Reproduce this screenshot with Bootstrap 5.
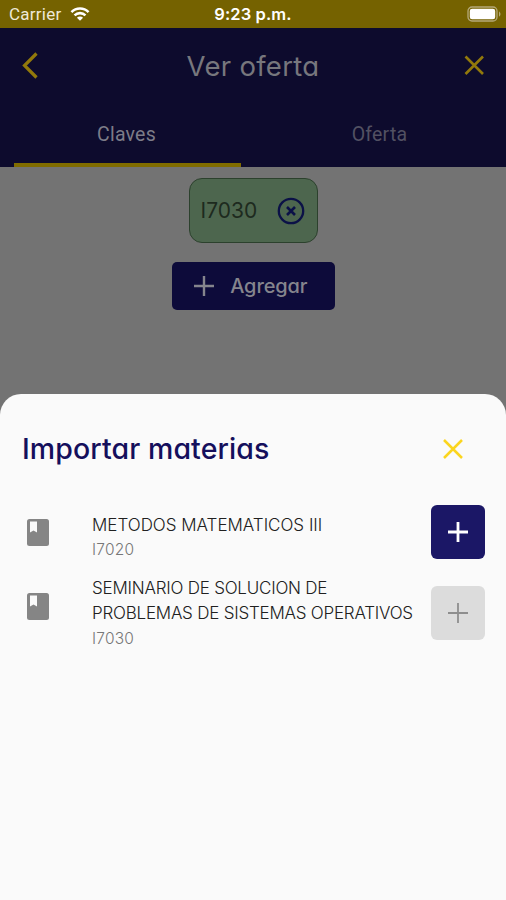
<!DOCTYPE html>
<html lang="es">
<head>
<meta charset="utf-8">
<meta name="viewport" content="width=device-width, initial-scale=1">
<title>Ver oferta</title>
<link href="https://cdn.jsdelivr.net/npm/bootstrap@5.3.0/dist/css/bootstrap.min.css" rel="stylesheet">
<style>
body{font-family:Inter,"Open Sans",sans-serif;font-feature-settings:"cv11";background:#737373;height:900px;overflow:hidden}
.t{white-space:nowrap;display:inline-block}
.status-strip{height:28px;background:#756200;color:#fff;line-height:28px;font-feature-settings:normal}
.carrier{font-family:Roboto,sans-serif;font-size:17px;letter-spacing:.25px;color:#eee9d8;margin-left:1px}
.clock{font-size:16.5px;font-weight:600;letter-spacing:.1px}
.side{width:140px}
.app-head{height:139px;background:#0d0b2d}
.title-row{height:76px}
.title-row h1{font-size:27.5px;font-weight:400;color:#77777d;letter-spacing:.3px;padding-left:2px}
.tabs-row{height:63px}
.tab-item{font-family:Roboto,sans-serif;font-size:19.5px;letter-spacing:.2px;color:#7c7c88;font-weight:400;font-feature-settings:normal;padding-top:19px;line-height:24px}
.tab-item.off{color:#525162}
.tab-item.on::after{content:"";display:block;height:4px;margin:16px 12px 0 14px;background:#806c00}
.code-chip{width:129px;height:65px;margin-top:11px;border:1px solid #2c412d;border-radius:13px;background:#4d664e;color:#1d2a1e;font-size:21px;padding-left:11px;padding-right:11px}
.add-btn{width:163px;height:48px;margin-top:19px;border-radius:5px;background:#0d0b3a;color:#85858d;font-size:20px;font-weight:500;letter-spacing:-.1px;padding:0 27px 0 21px}
.sheet{height:506px;margin-top:84px;background:#fafafa;border-radius:21px 21px 0 0}
.sheet-head{height:111px;padding:0 42px 0 22px}
.sheet-head h2{font-size:28.5px;font-weight:500;color:#150f5c;letter-spacing:.1px}
.sheet-head svg{margin-bottom:2px}
.subject{padding:0 21px 0 27px}
.subject-text{width:339px;margin-left:43px;font-size:17px;line-height:25.5px;font-weight:300;color:#202020}
.subject-text small{display:block;font-size:15.5px;line-height:24px;color:#777;letter-spacing:.2px}
.subject-first .subject-text{margin-top:8px}
.subject-first small{margin-top:-1px}
.subject-last{margin-top:23px}
.subject-last .subject-text{margin-top:-9px}
.book{margin-top:14px}
.subject-last .book{margin-top:8px}
.subject-last .sq{margin-top:1px}
.wide-line{letter-spacing:-.22px}
.sq{width:54px;height:54px;border-radius:6px;background:#1b1766;color:#fff;border:0;padding:0}
.sq.off{background:#dcdcdc;color:#8e8e8e}
svg{display:block;flex:none}
</style>
<script src="https://cdn.jsdelivr.net/npm/bootstrap@5.3.0/dist/js/bootstrap.bundle.min.js"></script>
</head>
<body>
<div class="status-strip d-flex justify-content-between align-items-center">
  <div class="side d-flex align-items-center ps-2"><span class="t carrier">Carrier</span>
    <svg class="ms-2" width="20" height="16" viewBox="0 0 22 17" fill="none" stroke="#fff" stroke-width="2.8"><path d="M1.6 6.4a13.2 13.2 0 0 1 18.8 0M5 10a8.5 8.5 0 0 1 12 0"/><path d="M11 16 7.6 12.7a4.8 4.8 0 0 1 6.8 0z" fill="#fff" stroke="none"/></svg>
  </div>
  <span class="t clock">9:23 p.m.</span>
  <div class="side d-flex justify-content-end pe-1"><svg width="35" height="16" viewBox="0 0 35 16"><rect x="1" y="1" width="29" height="14" rx="4" fill="none" stroke="#b5a978" stroke-width="1.3"/><rect x="2.8" y="2.8" width="25.4" height="10.4" rx="2.3" fill="#fff"/><path d="M32 5.2q3 2.800 0 5.600z" fill="#b5a978"/></svg></div>
</div>
<header class="app-head">
  <div class="title-row d-flex align-items-center justify-content-between px-3">
    <svg width="30" height="30" viewBox="0 0 30 30" fill="none" stroke="#92790b" stroke-width="3.2"><path d="M20.500 2.500 8.500 14.500l12 12"/></svg>
    <h1 class="m-0"><span class="t">Ver oferta</span></h1>
    <svg width="32" height="32" viewBox="0 0 32 32" fill="none" stroke="#92790b" stroke-width="2.600"><path d="m7.500 6.500 17.500 17.500m0-17.500L7.500 24"/></svg>
  </div>
  <nav class="tabs-row row g-0 text-center">
    <div class="col tab-item on"><span class="t">Claves</span></div>
    <div class="col tab-item off"><span class="t">Oferta</span></div>
  </nav>
</header>
<main class="d-flex flex-column align-items-center">
  <div class="code-chip d-flex align-items-center justify-content-between"><span class="t">I7030</span>
    <svg width="30" height="30" viewBox="0 0 30 30" fill="none" stroke="#0b1147" stroke-width="2.300"><circle cx="15" cy="15" r="12.200"/><path d="m11 11 8 8m0-8-8 8" stroke-width="2.600"/></svg>
  </div>
  <div class="add-btn d-flex align-items-center justify-content-between">
    <svg width="22" height="22" viewBox="0 0 22 22" stroke="#85858d" stroke-width="2.400"><path d="M1 11h20M11 1v20"/></svg><span class="t">Agregar</span>
  </div>
</main>
<section class="sheet">
  <div class="sheet-head d-flex align-items-center justify-content-between">
    <h2 class="m-0"><span class="t">Importar materias</span></h2>
    <svg width="22" height="22" viewBox="0 0 22 22" stroke="#fbd51f" stroke-width="2.500"><path d="m2 2 18 18m0-18L2 20"/></svg>
  </div>
  <div class="subject subject-first d-flex align-items-start">
    <svg class="book" width="22" height="27" viewBox="0 0 22 27"><rect width="22" height="27" rx="2.500" fill="#858585"/><path d="M3 2.500h7v11l-3.500-2-3.500 2z" fill="#fafafa"/></svg>
    <div class="subject-text"><span class="t">METODOS MATEMATICOS III</span><small>I7020</small></div>
    <button class="sq"><svg class="mx-auto" width="20" height="20" viewBox="0 0 20 20" stroke="currentColor" stroke-width="2.800"><path d="M0 10h20M10 0v20"/></svg></button>
  </div>
  <div class="subject subject-last d-flex align-items-start">
    <svg class="book" width="22" height="27" viewBox="0 0 22 27"><rect width="22" height="27" rx="2.500" fill="#858585"/><path d="M3 2.500h7v11l-3.500-2-3.500 2z" fill="#fafafa"/></svg>
    <div class="subject-text"><span class="t wide-line">SEMINARIO DE SOLUCION DE</span><br><span class="t wide-line">PROBLEMAS DE SISTEMAS OPERATIVOS</span><small>I7030</small></div>
    <button class="sq off"><svg class="mx-auto" width="20" height="20" viewBox="0 0 20 20" stroke="currentColor" stroke-width="1.800"><path d="M0 10h20M10 0v20"/></svg></button>
  </div>
</section>
</body>
</html>
